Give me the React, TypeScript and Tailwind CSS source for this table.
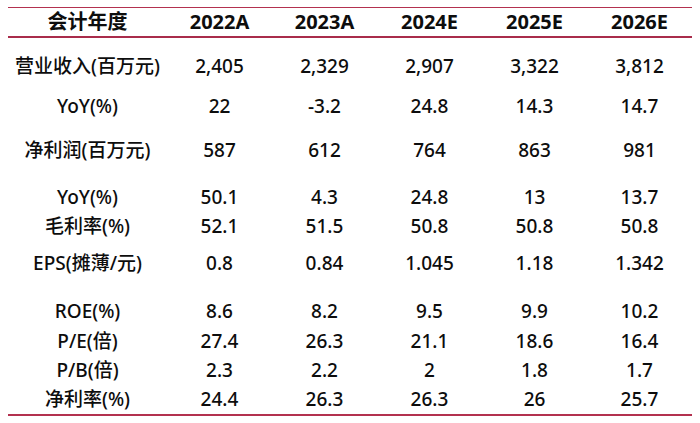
const years = ["2022A", "2023A", "2024E", "2025E", "2026E"];

// label, values, row classes (height + offset to match the uneven row spacing)
const rows: { label: string; values: string[]; cls: string }[] = [
  { label: "营业收入(百万元)", values: ["2,405", "2,329", "2,907", "3,322", "3,812"], cls: "h-[48px] pt-[8px]" },
  { label: "YoY(%)", values: ["22", "-3.2", "24.8", "14.3", "14.7"], cls: "h-[42px] pb-[2px]" },
  { label: "净利润(百万元)", values: ["587", "612", "764", "863", "981"], cls: "h-[46px] pb-[2px]" },
  { label: "YoY(%)", values: ["50.1", "4.3", "24.8", "13", "13.7"], cls: "h-[38px] pt-[8px]" },
  { label: "毛利率(%)", values: ["52.1", "51.5", "50.8", "50.8", "50.8"], cls: "h-[33px] pb-[5px]" },
  { label: "EPS(摊薄/元)", values: ["0.8", "0.84", "1.045", "1.18", "1.342"], cls: "h-[42px] pb-[6px]" },
  { label: "ROE(%)", values: ["8.6", "8.2", "9.5", "9.9", "10.2"], cls: "h-[40px] pt-[8px]" },
  { label: "P/E(倍)", values: ["27.4", "26.3", "21.1", "18.6", "16.4"], cls: "h-[29px]" },
  { label: "P/B(倍)", values: ["2.3", "2.2", "2", "1.8", "1.7"], cls: "h-[29px]" },
  { label: "净利率(%)", values: ["24.4", "26.3", "26.3", "26", "25.7"], cls: "h-[29px]" },
];

const App = () => {
  return (
    <div
      className="w-[700px] h-[423px] bg-white pt-[7px] px-[8px] text-[#0d0d0d] text-[19px] leading-none"
      style={{ fontFamily: '"Noto Sans", "Noto Sans CJK SC", sans-serif' }}
    >
      <div className="w-[684px] border-t-[1.5px] border-[#b3314f]">
        {/* Header */}
        <div className="flex items-center h-[30px] border-b-[2.5px] border-[#a92c4b] font-bold text-[20px]">
          <div className="w-[159px] text-center">会计年度</div>
          {years.map((y) => (
            <div key={y} className="w-[105px] text-center">{y}</div>
          ))}
        </div>

        {/* Body */}
        <div className="border-b-[2.5px] border-[#b3314f] font-medium">
          {rows.map((r, i) => (
            <div key={i} className={`flex items-center ${r.cls}`}>
              <div className="w-[159px] text-center">{r.label}</div>
              {r.values.map((v, j) => (
                <div key={j} className="w-[105px] text-center">{v}</div>
              ))}
            </div>
          ))}
        </div>
      </div>
    </div>
  );
};

export default App;
